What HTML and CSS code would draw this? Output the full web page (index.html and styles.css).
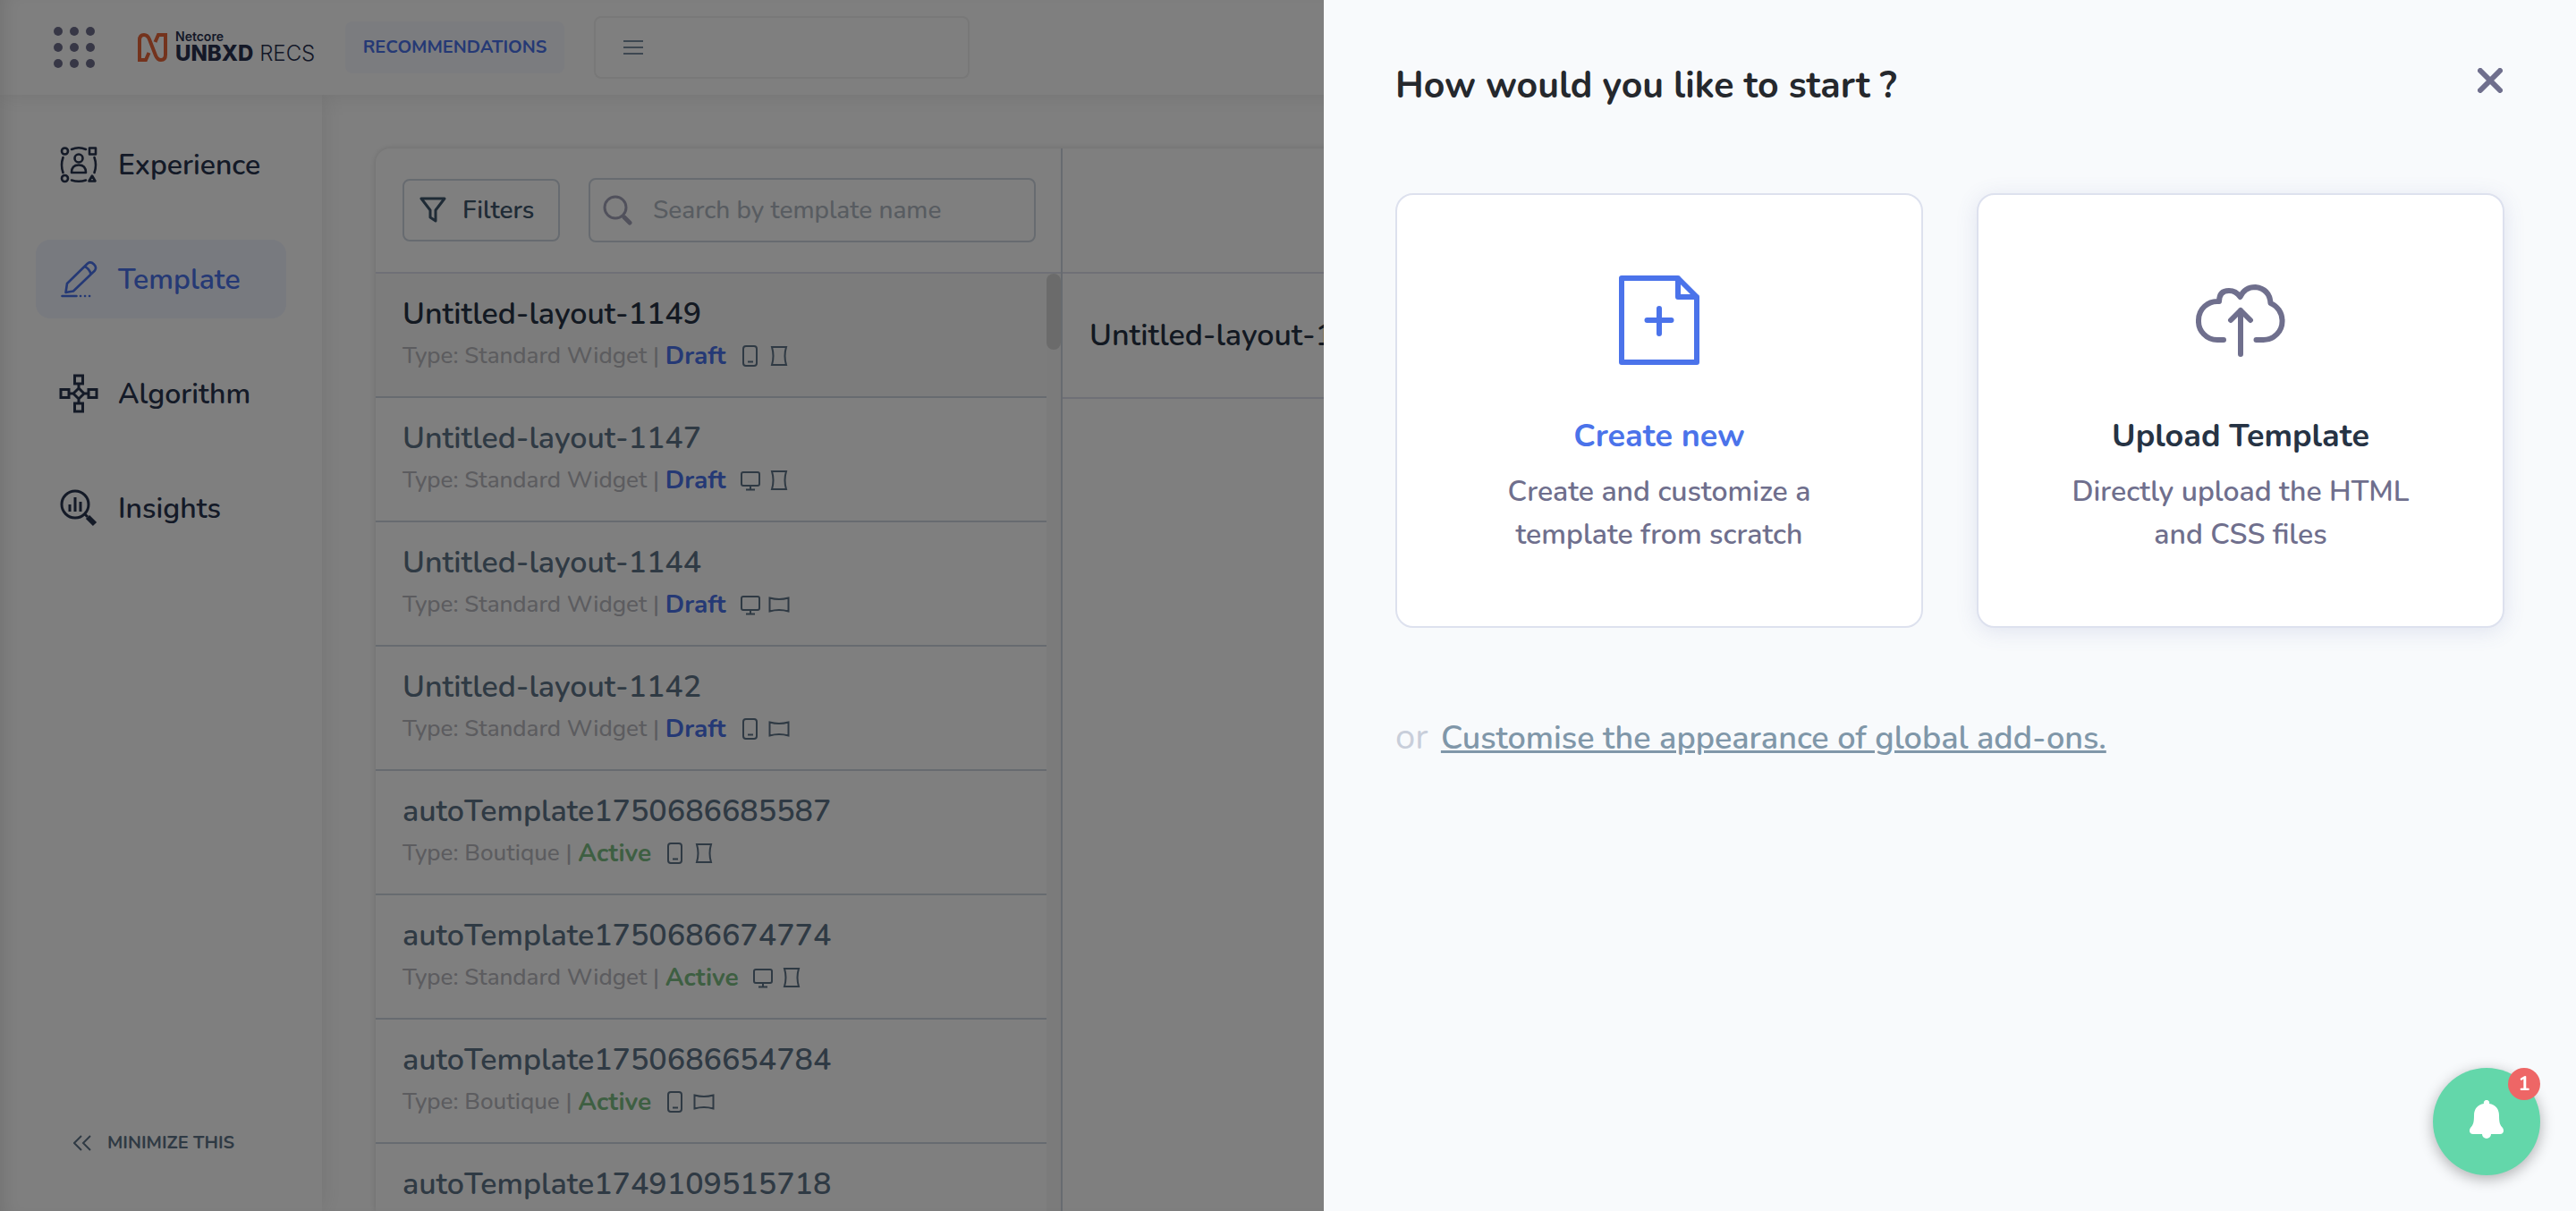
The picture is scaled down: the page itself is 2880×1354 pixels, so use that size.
FILE: index.html
```html
<!DOCTYPE html>
<html lang="en">
<head>
<meta charset="utf-8">
<meta name="viewport" content="width=device-width, initial-scale=1">
<title>Netcore Unbxd Recs – Templates</title>
<link rel="stylesheet" href="styles.css">
</head>
<body>
<svg class="sprite" aria-hidden="true">
  <symbol id="phone" viewBox="0 0 24 28"><g fill="none" stroke="currentColor" stroke-width="2"><rect x="4" y="3" width="15" height="22" rx="3"/><path d="M9 20.500h6"/></g></symbol>
  <symbol id="desktop" viewBox="0 0 24 28"><g fill="none" stroke="currentColor" stroke-width="2"><rect x="2" y="5" width="20" height="15" rx="2"/><path d="M12 20v4M7 24.500h10"/></g></symbol>
  <symbol id="portrait" viewBox="0 0 24 28"><path d="M4 4h16q-3 10 0 20H4q3-10 0-20z" fill="none" stroke="currentColor" stroke-width="2"/></symbol>
  <symbol id="landscape" viewBox="0 0 24 28"><path d="M1.500 6.500q10.500 3 21 0v15q-10.500-3-21 0z" fill="none" stroke="currentColor" stroke-width="2"/></symbol>
</svg>

<div class="app">
  <header class="topbar">
    <button class="icon-button apps" aria-label="Apps">
      <svg width="46" height="46" viewBox="0 0 46 46" fill="#6f6f8d"><circle cx="5" cy="5" r="5"/><circle cx="23" cy="5" r="5"/><circle cx="41" cy="5" r="5"/><circle cx="5" cy="23" r="5"/><circle cx="23" cy="23" r="5"/><circle cx="41" cy="23" r="5"/><circle cx="5" cy="41" r="5"/><circle cx="23" cy="41" r="5"/><circle cx="41" cy="41" r="5"/></svg>
    </button>
    <div class="brand">
      <svg width="34" height="32" viewBox="0 0 34 32" fill="none" stroke="#e8663a" stroke-width="4"><path d="M12.500 22l-3.500 8H2V8q0-6 5-6 4 0 6 5l7 18q2 5 6 5 5 0 5-6V2h-8l-3.500 8"/></svg>
      <div class="brand-name">
        <span class="brand-top">Netcore</span>
        <span class="brand-main"><b>UNBXD</b> RECS</span>
      </div>
    </div>
    <span class="product-tag">RECOMMENDATIONS</span>
    <button class="site-picker" aria-label="Choose a site">
      <svg width="22" height="16" viewBox="0 0 22 16" stroke="#7a8fa3" stroke-width="2"><path d="M0 1h22M0 8h22M0 15h22"/></svg>
    </button>
  </header>

  <div class="body">
    <nav class="sidebar">
      <ul class="nav-list">
        <li><a class="nav-item" href="#experience">
          <svg width="44" height="44" viewBox="0 0 44 44" fill="none" stroke="currentColor" stroke-width="2.600" stroke-linecap="round" stroke-linejoin="round"><circle cx="6.500" cy="7" r="3.500"/><rect x="34" y="3.500" width="7" height="7"/><circle cx="6.500" cy="37.500" r="3.500"/><path d="M37 34.500l3.500 6h-7z"/><path d="M14 5q8-3.500 16 0M14 39.500q8 2.500 16 0M4.500 14q-3 8.500 0 17M39.500 14q3 8.500 0 17"/><circle cx="22" cy="15" r="4.500"/><path d="M14 31q0-8.500 8-8.500t8 8.500z"/></svg>
          Experience</a></li>
        <li><a class="nav-item active" href="#template" aria-current="page">
          <svg width="44" height="44" viewBox="0 0 44 44" fill="none" stroke="currentColor" stroke-width="2.600" stroke-linecap="round" stroke-linejoin="round"><path d="M9 27L32 4.500q3.500-2.500 7 1t1 7L16 35.500l-8.500 1.500zM28.500 8q5 2 7 8"/><path d="M3.500 41h16M24 41h.1M29 41h.1M34 41h.1"/></svg>
          Template</a></li>
        <li><a class="nav-item" href="#algorithm">
          <svg width="44" height="44" viewBox="0 0 44 44" fill="none" stroke="currentColor" stroke-width="3"><rect x="17.500" y="2" width="9" height="9"/><rect x="17.500" y="33" width="9" height="9"/><rect x="2" y="17.500" width="9" height="9"/><rect x="33" y="17.500" width="9" height="9"/><path d="M22 16l6 6-6 6-6-6zM22 11v5M22 28v5M11 22h5M28 22h5"/></svg>
          Algorithm</a></li>
        <li><a class="nav-item" href="#insights">
          <svg width="44" height="44" viewBox="0 0 44 44" fill="none" stroke="currentColor" stroke-width="3"><circle cx="18" cy="18" r="15"/><path d="M12 18v8M18 10v16M24 15v11M29 29l3 3"/><path d="M32 32l8 8" stroke-width="6"/></svg>
          Insights</a></li>
      </ul>
      <button class="minimize">
        <svg width="20" height="18" viewBox="0 0 20 18" fill="none" stroke="currentColor" stroke-width="2"><path d="M9 1L1 9l8 8M19 1l-8 8 8 8"/></svg>
        MINIMIZE THIS
      </button>
    </nav>

    <main class="workspace">
      <section class="templates" aria-label="Templates">
        <div class="toolbar">
          <button class="filters">
            <svg width="30" height="30" viewBox="0 0 30 30" fill="none" stroke="currentColor" stroke-width="3" stroke-linejoin="round"><path d="M2 2h26L18 15v12l-6-4v-8z"/></svg>
            Filters
          </button>
          <label class="search">
            <svg width="34" height="34" viewBox="0 0 34 34" fill="none" stroke="#a3a3b8" stroke-linecap="round"><circle cx="14" cy="14" r="12" stroke-width="3"/><path d="M24 25l6 6" stroke-width="5"/></svg>
            <input type="search" placeholder="Search by template name" aria-label="Search by template name">
          </label>
        </div>
        <div class="list-wrap">
          <ul class="list">
            <li class="row selected"><h3>Untitled-layout-1149</h3><p>Type: Standard Widget | <b class="draft">Draft</b><svg class="mini"><use href="#phone"/></svg><svg class="mini"><use href="#portrait"/></svg></p></li>
            <li class="row"><h3>Untitled-layout-1147</h3><p>Type: Standard Widget | <b class="draft">Draft</b><svg class="mini"><use href="#desktop"/></svg><svg class="mini"><use href="#portrait"/></svg></p></li>
            <li class="row"><h3>Untitled-layout-1144</h3><p>Type: Standard Widget | <b class="draft">Draft</b><svg class="mini"><use href="#desktop"/></svg><svg class="mini"><use href="#landscape"/></svg></p></li>
            <li class="row"><h3>Untitled-layout-1142</h3><p>Type: Standard Widget | <b class="draft">Draft</b><svg class="mini"><use href="#phone"/></svg><svg class="mini"><use href="#landscape"/></svg></p></li>
            <li class="row"><h3>autoTemplate1750686685587</h3><p>Type: Boutique | <b class="live">Active</b><svg class="mini"><use href="#phone"/></svg><svg class="mini"><use href="#portrait"/></svg></p></li>
            <li class="row"><h3>autoTemplate1750686674774</h3><p>Type: Standard Widget | <b class="live">Active</b><svg class="mini"><use href="#desktop"/></svg><svg class="mini"><use href="#portrait"/></svg></p></li>
            <li class="row"><h3>autoTemplate1750686654784</h3><p>Type: Boutique | <b class="live">Active</b><svg class="mini"><use href="#phone"/></svg><svg class="mini"><use href="#landscape"/></svg></p></li>
            <li class="row"><h3>autoTemplate1749109515718</h3></li>
          </ul>
          <div class="track"><div class="thumb"></div></div>
        </div>
      </section>
      <section class="preview" aria-label="Preview">
        <div class="preview-bar"></div>
        <h2 class="preview-title">Untitled-layout-1149</h2>
      </section>
    </main>
  </div>
</div>

<div class="overlay">
  <aside class="drawer" role="dialog" aria-labelledby="drawer-title">
    <div class="drawer-head">
      <h1 id="drawer-title">How would you like to start ?</h1>
      <button class="icon-button close" aria-label="Close">
        <svg width="28" height="28" viewBox="0 0 28 28" stroke="#6f6f8d" stroke-width="6" stroke-linecap="round"><path d="M3 3l22 22M25 3L3 25"/></svg>
      </button>
    </div>
    <div class="choices">
      <button class="choice primary">
        <svg width="100" height="100" viewBox="0 0 100 100" fill="none" stroke="#4b73ea" stroke-width="6" stroke-linejoin="round" stroke-linecap="round"><path d="M8 3h63l21 21v73H8zM71 3v21h21M50 37v28M36.500 50h27"/></svg>
        <span class="choice-title">Create new</span>
        <span class="choice-text">Create and customize a<br>template from scratch</span>
      </button>
      <button class="choice raised">
        <svg width="100" height="100" viewBox="0 0 100 100" fill="none" stroke="#6f6f8d" stroke-width="6" stroke-linejoin="round" stroke-linecap="round"><path d="M31 72h-7a21 21 0 0 1-21-22 21 21 0 0 1 23-21q0-12 11-12 8 0 12.500 7 5-11 17-11 16 2 17 18a21 21 0 0 1 13 19 21 21 0 0 1-21 22h-8M50 88V39M39 50l11-11 11 11"/></svg>
        <span class="choice-title">Upload Template</span>
        <span class="choice-text">Directly upload the HTML<br>and CSS files</span>
      </button>
    </div>
    <p class="addons">or <a href="#addons">Customise the appearance of global add-ons.</a></p>
  </aside>
</div>

<button class="bell" aria-label="Notifications, 1 new">
  <svg width="38" height="44" viewBox="0 0 38 44" fill="#fff"><path d="M19 0a3 3 0 0 1 3 4c7 1 11 6 11 13 0 8 1 11 4 14 2 3 1 7-3 7H24a5 5 0 0 1-10 0H4c-4 0-5-4-3-7 3-3 4-6 4-14C5 10 9 5 16 4a3 3 0 0 1 3-4z"/></svg>
  <span class="count">1</span>
</button>
</body>
</html>
```

FILE: styles.css
```css
:root {
  --line: #ced6e0;
  --line-soft: #dfe1ec;
  --ink: #263344;
  --slate: #5f7488;
  --muted: #6f6f8d;
  --blue: #4b73ea;
}

* { box-sizing: border-box; }

body {
  margin: 0;
  background: #fff;
  color: var(--ink);
  font-family: Nunito, "Open Sans", sans-serif;
  font-size: 26px;
}

h1, h2, h3, p, ul { margin: 0; padding: 0; }
ul { list-style: none; }
a { color: inherit; text-decoration: none; }
button { margin: 0; padding: 0; border: 0; background: none; color: inherit; font: inherit; }
svg { display: block; flex: none; }
.sprite { position: absolute; width: 0; height: 0; }
.icon-button { display: flex; }

.app { display: flex; flex-direction: column; height: 100vh; overflow: hidden; }

/* Top bar */
.topbar {
  position: relative;
  z-index: 2;
  display: flex;
  align-items: center;
  flex: none;
  height: 106px;
  padding-left: 60px;
  background: #fff;
  box-shadow: 0 0 24px rgba(60, 60, 60, .12);
}
.brand { display: flex; align-items: center; gap: 8px; width: 232px; margin-left: 48px; }
.brand-name {
  display: flex;
  flex-direction: column;
  color: #28304f;
  font-family: Inter, sans-serif;
  white-space: nowrap;
}
.brand-top { font-size: 14px; font-weight: 600; line-height: 14px; }
.brand-main { font-size: 24px; font-weight: 300; line-height: 24px; }
.brand-main b { font-weight: 800; }
.product-tag {
  width: 245px;
  border-radius: 8px;
  background: #f6f8ff;
  color: var(--blue);
  font-size: 20px;
  font-weight: 700;
  line-height: 58px;
  text-align: center;
}
.site-picker {
  display: flex;
  align-items: center;
  width: 420px;
  height: 70px;
  margin-left: 33px;
  padding-left: 31px;
  border: 2px solid #f0f0f0;
  border-radius: 8px;
}

.body { display: flex; flex: 1; min-height: 0; }

/* Sidebar */
.sidebar {
  display: flex;
  flex-direction: column;
  justify-content: space-between;
  flex: none;
  width: 360px;
  padding: 34px 40px 62px;
  box-shadow: 0 0 24px rgba(60, 60, 60, .12);
}
.nav-list { display: flex; flex-direction: column; gap: 40px; }
.nav-item {
  display: flex;
  align-items: center;
  gap: 22px;
  height: 88px;
  padding-left: 26px;
  border-radius: 16px;
  color: #28344f;
  font-size: 32px;
  font-weight: 600;
}
.nav-item.active { background: #f0f4ff; color: var(--blue); }
.minimize {
  display: flex;
  align-items: center;
  gap: 18px;
  padding-left: 42px;
  color: var(--slate);
  font-size: 20px;
  font-weight: 700;
  line-height: 28px;
}

/* Template list */
.workspace {
  display: flex;
  flex: 1;
  min-width: 0;
  margin: 60px 60px 0;
  border-radius: 16px 16px 0 0;
  box-shadow: 0 0 6px rgba(60, 60, 60, .2);
}
.templates {
  display: flex;
  flex-direction: column;
  flex: none;
  width: 768px;
  border-right: 2px solid var(--line);
}
.toolbar {
  display: flex;
  align-items: center;
  justify-content: space-between;
  flex: none;
  height: 140px;
  padding: 0 28px 0 30px;
  border-bottom: 2px solid var(--line-soft);
}
.filters {
  display: flex;
  align-items: center;
  gap: 18px;
  width: 176px;
  height: 70px;
  padding-left: 17px;
  border: 2px solid var(--line);
  border-radius: 8px;
  color: #3e566c;
  font-size: 28px;
  font-weight: 600;
}
.search {
  display: flex;
  align-items: center;
  gap: 22px;
  width: 500px;
  height: 72px;
  padding-left: 14px;
  border: 2px solid var(--line);
  border-radius: 8px;
}
.search input {
  flex: 1;
  min-width: 0;
  padding: 0;
  border: 0;
  background: none;
  font: inherit;
  font-size: 28px;
  font-weight: 500;
  outline: 0;
}
.search input::placeholder { color: #b0b8c2; opacity: 1; }
.list-wrap { display: flex; flex: 1; min-height: 0; }
.list { flex: 1; overflow: hidden; }
.row { height: 139px; padding: 22px 30px 0; border-bottom: 2px solid var(--line); color: var(--slate); }
.row.selected { background: #f8f8f8; }
.row.selected h3, .preview-title { color: var(--ink); }
.row h3, .preview-title { font-size: 34px; font-weight: 600; line-height: 46px; }
.row p {
  display: flex;
  align-items: center;
  color: #b8b8be;
  font-size: 26px;
  font-weight: 500;
  line-height: 48px;
  white-space: pre;
}
.row b { margin-right: 15px; font-size: 28px; font-weight: 700; }
.draft { color: var(--blue); }
.live { color: #7cbf85; }
.mini { width: 24px; height: 28px; margin-right: 8px; color: var(--slate); }
.track { flex: none; width: 16px; background: #f6f6f6; }
.thumb { height: 85px; border-radius: 8px; background: #d6d6d6; }

.preview { flex: 1; min-width: 0; }
.preview-bar { height: 140px; border-bottom: 2px solid var(--line-soft); }
.preview-title { padding: 46px 30px; border-bottom: 2px solid var(--line-soft); }

/* Drawer */
.overlay {
  position: fixed;
  inset: 0;
  z-index: 10;
  display: flex;
  justify-content: flex-end;
  background: rgba(0, 0, 0, .5);
  box-shadow: inset 16px 0 24px -16px rgba(0, 0, 0, .14);
}
.drawer {
  width: 1400px;
  max-width: 100%;
  padding: 68px 80px;
  background: #f8fafc;
}
.drawer-head { display: flex; justify-content: space-between; }
.drawer h1 { color: #25282d; font-size: 41px; font-weight: 700; line-height: 56px; }
.close { align-self: flex-start; margin: 8px 2px 0 0; }
.choices { display: grid; grid-template-columns: 1fr 1fr; gap: 60px; margin-top: 92px; }
.choice {
  display: flex;
  flex-direction: column;
  align-items: center;
  padding: 90px 20px 78px;
  border: 2px solid #dde1ee;
  border-radius: 20px;
  background: #fff;
}
.choice.raised { box-shadow: 0 4px 24px rgba(75, 90, 160, .14); }
.choice-title { margin-top: 56px; font-size: 36px; font-weight: 700; line-height: 48px; }
.primary .choice-title { color: var(--blue); }
.choice-text { margin-top: 14px; color: var(--muted); font-size: 32px; font-weight: 600; line-height: 48px; }
.addons { margin-top: 98px; color: #c8ceda; font-size: 40px; line-height: 48px; }
.addons a {
  margin-left: 4px;
  color: #8097a9;
  font-size: 36px;
  font-weight: 600;
  text-decoration: underline;
  text-decoration-thickness: 3px;
}

/* Notification bell */
.bell {
  position: fixed;
  right: 40px;
  bottom: 40px;
  z-index: 20;
  display: flex;
  align-items: center;
  justify-content: center;
  width: 120px;
  height: 120px;
  padding-bottom: 4px;
  border-radius: 50%;
  background: #63d7aa;
  box-shadow: 0 4px 16px rgba(0, 0, 0, .3);
}
.count {
  position: absolute;
  top: 0;
  right: 0;
  width: 36px;
  border-radius: 18px;
  background: #ee6666;
  color: #fff;
  font-size: 22px;
  font-weight: 700;
  line-height: 36px;
  text-align: center;
}
```
